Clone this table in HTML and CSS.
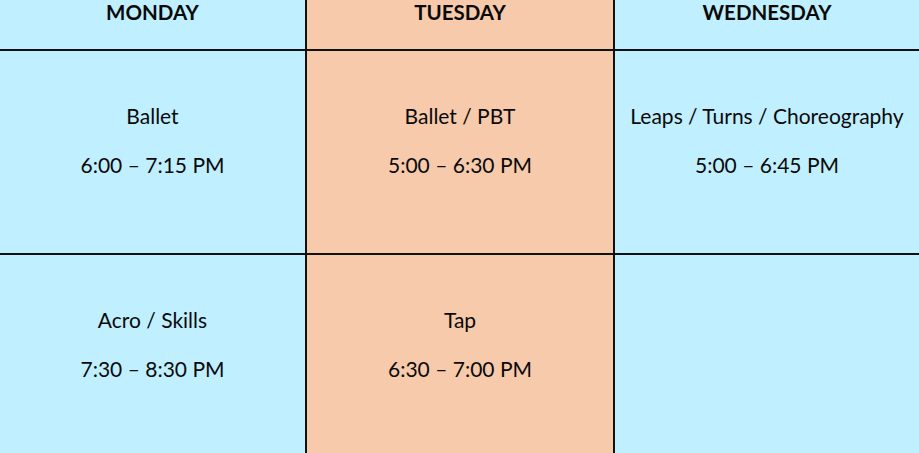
FILE: index.html
```html
<!DOCTYPE html>
<html lang="en">
<head>
<meta charset="utf-8">
<title>Class Schedule</title>
<link rel="stylesheet" href="styles.css">
</head>
<body>
<div class="schedule">
  <div class="cell head blue">MONDAY</div>
  <div class="cell head peach">TUESDAY</div>
  <div class="cell head blue">WEDNESDAY</div>

  <div class="cell slot blue"><p class="name">Ballet</p><p class="time">6:00 – 7:15 PM</p></div>
  <div class="cell slot peach"><p class="name">Ballet / PBT</p><p class="time">5:00 – 6:30 PM</p></div>
  <div class="cell slot blue"><p class="name">Leaps / Turns / Choreography</p><p class="time">5:00 – 6:45 PM</p></div>

  <div class="cell slot blue"><p class="name">Acro / Skills</p><p class="time">7:30 – 8:30 PM</p></div>
  <div class="cell slot peach"><p class="name">Tap</p><p class="time">6:30 – 7:00 PM</p></div>
  <div class="cell slot blue"></div>
</div>
</body>
</html>
```
FILE: styles.css
```css
html, body {
  margin: 0;
  padding: 0;
  background: #c0f0ff;
  overflow: hidden;
}
.schedule {
  display: grid;
  grid-template-columns: 305px 306px 304px;
  grid-template-rows: 49px 202px 220px;
  column-gap: 2px;
  row-gap: 2px;
  background: #111;
  width: 919px;
  font-family: Lato, "Liberation Sans", sans-serif;
  color: #0a0a0a;
}
.cell {
  display: flex;
  flex-direction: column;
  align-items: center;
  text-align: center;
}
.blue { background: #c0f0ff; }
.peach { background: #f7caac; }
.head {
  font-weight: 700;
  font-size: 20.5px;
  line-height: 24px;
  padding-top: 0;
}
.slot {
  font-size: 21px;
  line-height: 24px;
  padding-top: 53px;
  gap: 25px;
}
.slot p { margin: 0; }
```
